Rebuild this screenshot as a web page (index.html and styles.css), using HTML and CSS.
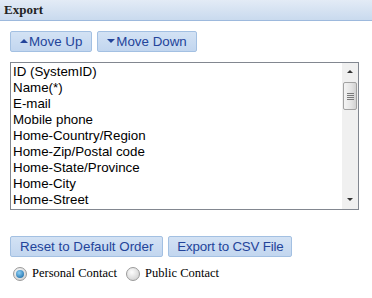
FILE: index.html
```html
<!DOCTYPE html>
<html lang="en">
<head>
  <meta charset="UTF-8" />
  <title>Export</title>
  <link rel="stylesheet" href="styles.css">
</head>
<body>
  <div class="panel">
    <div class="panel-head">Export</div>
    <div class="panel-body">
      <div class="toolbar">
        <button class="btn"><span class="tri up"></span>Move Up</button>
        <button class="btn"><span class="tri down"></span>Move Down</button>
      </div>

      <div class="listbox">
        <ul class="items">
          <li>ID (SystemID)</li>
          <li>Name(*)</li>
          <li>E-mail</li>
          <li>Mobile phone</li>
          <li>Home-Country/Region</li>
          <li>Home-Zip/Postal code</li>
          <li>Home-State/Province</li>
          <li>Home-City</li>
          <li>Home-Street</li>
        </ul>
        <div class="scrollbar">
          <div class="arrow up"></div>
          <div class="track">
            <div class="thumb"><span></span><span></span><span></span><span></span></div>
          </div>
          <div class="arrow down"></div>
        </div>
      </div>

      <div class="toolbar actions">
        <button class="btn">Reset to Default Order</button>
        <button class="btn tight">Export to CSV File</button>
      </div>

      <div class="radios">
        <label class="radio"><span class="dot checked"></span>Personal Contact</label>
        <label class="radio"><span class="dot"></span>Public Contact</label>
      </div>
    </div>
  </div>
</body>
</html>
```

FILE: styles.css
```css
body {
  margin: 0;
  background: #fff;
  font-family: "Liberation Sans", Arial, sans-serif;
}

.panel-head {
  height: 20px;
  line-height: 19px;
  padding-left: 4px;
  font-family: "Liberation Serif", "Times New Roman", serif;
  font-weight: bold;
  font-size: 13px;
  color: #222;
  background: linear-gradient(#e3ebf6, #c9daee);
  border-bottom: 1px solid #9db9dd;
}

.panel-body {
  padding: 10px 10px 0 10px;
}

.toolbar {
  display: flex;
  gap: 5px;
}

.btn {
  height: 21px;
  padding: 0 9px;
  font-family: "Liberation Sans", Arial, sans-serif;
  font-size: 13.33px;
  color: #23449a;
  background: linear-gradient(#d3e2f4, #c2d6ef);
  border: 1px solid #a3c0e2;
  border-radius: 2px;
  line-height: 19px;
}

.btn.tight {
  padding: 0 8px;
  letter-spacing: -0.2px;
}

.btn .tri {
  display: inline-block;
  width: 0;
  height: 0;
  margin-right: 1px;
  border-left: 4px solid transparent;
  border-right: 4px solid transparent;
  vertical-align: 3px;
}

.btn .tri.up {
  border-bottom: 4px solid #23449a;
}

.btn .tri.down {
  border-top: 4px solid #23449a;
}

.listbox {
  display: flex;
  width: 347px;
  height: 146px;
  margin-top: 10px;
  border: 1px solid #828790;
}

.items {
  flex: 1;
  list-style: none;
  margin: 0;
  padding: 1px 2px;
  font-size: 13.33px;
  line-height: 16px;
  color: #000;
}

.scrollbar {
  width: 16px;
  display: flex;
  flex-direction: column;
  background: #f0f0f0;
}

.arrow {
  height: 17px;
  position: relative;
}

.arrow::after {
  content: "";
  position: absolute;
  left: 5px;
  top: 7px;
  border-left: 3px solid transparent;
  border-right: 3px solid transparent;
}

.arrow.up::after {
  border-bottom: 3px solid #333;
}

.arrow.down::after {
  top: 6px;
  border-top: 3px solid #333;
}

.track {
  flex: 1;
  padding-top: 2px;
}

.thumb {
  height: 28px;
  margin: 0 1px;
  box-sizing: border-box;
  border: 1px solid #a2a2a2;
  border-radius: 2px;
  background: linear-gradient(90deg, #f4f4f4, #e4e4e4 60%, #d2d2d2);
  display: flex;
  flex-direction: column;
  align-items: center;
  justify-content: center;
  gap: 1px;
}

.thumb span {
  width: 7px;
  height: 1px;
  background: #7a7a7a;
}

.actions {
  margin-top: 26px;
}

.radios {
  display: flex;
  gap: 9px;
  margin-top: 9px;
  padding-left: 3px;
  font-family: "Liberation Serif", "Times New Roman", serif;
  font-size: 12.5px;
  color: #000;
}

.radio {
  display: flex;
  align-items: center;
  gap: 5px;
}

.dot {
  width: 12px;
  height: 12px;
  border-radius: 50%;
  border: 1px solid #9a9a9a;
  background: radial-gradient(circle at 40% 35%, #fdfdfd, #c8c8c8);
  position: relative;
}

.dot.checked::after {
  content: "";
  position: absolute;
  left: 2px;
  top: 2px;
  width: 8px;
  height: 8px;
  border-radius: 50%;
  background: radial-gradient(circle at 40% 35%, #8fd0f5, #0a5e9e);
}
```
